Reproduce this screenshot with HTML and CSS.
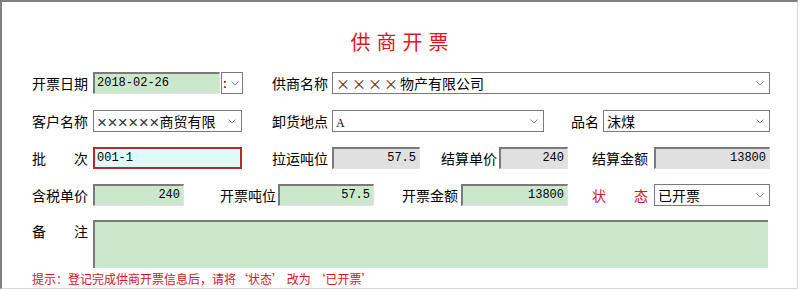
FILE: index.html
```html
<!DOCTYPE html>
<html>
  <head>
    <meta http-equiv="content-type" content="text/html; charset=UTF-8">
    <title>供商开票</title>
    <link rel="stylesheet" href="styles.css">
  </head>
<body>
  <div class="form">
    <h1 class="title">供商开票</h1>

    <div class="row r1">
      <div class="lbl">开票日期</div>
      <div class="field sunk green num" style="margin-left:5px;width:127px">2018-02-26</div>
      <div class="dropbtn"><span class="colon">:</span><svg class="chev" width="8" height="5" viewBox="0 0 8 5"><path d="M0.5 0.5 L4 4 L7.5 0.5" fill="none" stroke="#8a8a8a" stroke-width="1"/></svg></div>
      <div class="lbl" style="margin-left:29px">供商名称</div>
      <div class="field combo" style="margin-left:4px;width:438px"><span class="xx wide">××××</span>物产有限公司<svg class="chev" width="8" height="5" viewBox="0 0 8 5"><path d="M0.5 0.5 L4 4 L7.5 0.5" fill="none" stroke="#8a8a8a" stroke-width="1"/></svg></div>
    </div>

    <div class="row r2">
      <div class="lbl">客户名称</div>
      <div class="field combo" style="margin-left:5px;width:149px"><span class="xx narrow">××××××</span>商贸有限<svg class="chev" width="8" height="5" viewBox="0 0 8 5"><path d="M0.5 0.5 L4 4 L7.5 0.5" fill="none" stroke="#8a8a8a" stroke-width="1"/></svg></div>
      <div class="lbl" style="margin-left:30px">卸货地点</div>
      <div class="field combo" style="margin-left:4px;width:212px"><span class="serif">A</span><svg class="chev" width="8" height="5" viewBox="0 0 8 5"><path d="M0.5 0.5 L4 4 L7.5 0.5" fill="none" stroke="#8a8a8a" stroke-width="1"/></svg></div>
      <div class="lbl short" style="margin-left:27px">品名</div>
      <div class="field combo" style="margin-left:4px;width:167px">沫煤<svg class="chev" width="8" height="5" viewBox="0 0 8 5"><path d="M0.5 0.5 L4 4 L7.5 0.5" fill="none" stroke="#8a8a8a" stroke-width="1"/></svg></div>
    </div>

    <div class="row r3">
      <div class="lbl spread"><span>批</span><span>次</span></div>
      <div class="field batch num" style="margin-left:5px;width:149px">001-1</div>
      <div class="lbl" style="margin-left:30px">拉运吨位</div>
      <div class="field sunk grey num right" style="margin-left:4px;width:88px">57.5</div>
      <div class="lbl" style="margin-left:21px">结算单价</div>
      <div class="field sunk grey num right" style="margin-left:2px;width:69px">240</div>
      <div class="lbl" style="margin-left:24px">结算金额</div>
      <div class="field sunk grey num right" style="margin-left:6px;width:116px">13800</div>
    </div>

    <div class="row r4">
      <div class="lbl">含税单价</div>
      <div class="field sunk green num right" style="margin-left:5px;width:91px">240</div>
      <div class="lbl" style="margin-left:36px">开票吨位</div>
      <div class="field sunk green num right" style="margin-left:2px;width:96px">57.5</div>
      <div class="lbl" style="margin-left:28px">开票金额</div>
      <div class="field sunk green num right" style="margin-left:3px;width:107px">13800</div>
      <div class="lbl spread red" style="margin-left:24px"><span>状</span><span>态</span></div>
      <div class="field combo" style="margin-left:6px;width:116px">已开票<svg class="chev" width="8" height="5" viewBox="0 0 8 5"><path d="M0.5 0.5 L4 4 L7.5 0.5" fill="none" stroke="#8a8a8a" stroke-width="1"/></svg></div>
    </div>

    <div class="row r5">
      <div class="lbl spread top"><span>备</span><span>注</span></div>
      <div class="field sunk green memo" style="margin-left:5px;width:675px"></div>
    </div>

    <div class="hint">提示：登记完成供商开票信息后，请将‘状态’ 改为 ‘已开票’</div>
  </div>
</body>
</html>
```

FILE: styles.css
```css
html, body {
  margin: 0;
  background: #fff;
}

body {
  font-family: "Noto Sans CJK SC", sans-serif;
  font-size: 14px;
  color: #000;
}

.form {
  box-sizing: border-box;
  width: 798px;
  height: 289px;
  border-top: 2px solid #808080;
  border-left: 2px solid #808080;
  border-right: 1px solid #d9d9d9;
  border-bottom: 1px solid #d9d9d9;
  padding-top: 26px;
}

.title {
  margin: 0;
  height: 28px;
  line-height: 28px;
  text-align: center;
  font-size: 20px;
  font-weight: normal;
  letter-spacing: 6px;
  padding-left: 6px;
  color: #e8141c;
}

.row {
  display: flex;
  align-items: center;
  height: 22px;
}
.r1 { margin-top: 16px; }
.r2 { margin-top: 16px; }
.r3 { margin-top: 15px; }
.r4 { margin-top: 15px; }
.r5 {
  margin-top: 14px;
  height: 48px;
  align-items: flex-start;
}

.lbl {
  width: 56px;
  margin-left: 30px;
  line-height: 20px;
  white-space: nowrap;
  flex: none;
}
.lbl.short { width: 28px; }
.lbl.spread {
  display: flex;
  justify-content: space-between;
}
.lbl.top { padding-top: 1px; }
.red { color: #d4141e; }

.field {
  box-sizing: border-box;
  height: 22px;
  line-height: 19px;
  flex: none;
  white-space: nowrap;
  overflow: hidden;
}

.sunk {
  border-top: 2px solid #7a7a7a;
  border-left: 2px solid #7a7a7a;
  border-right: 1px solid #e4e4e4;
  border-bottom: 1px solid #e4e4e4;
  padding: 0 3px 0 2px;
}
.green { background: #cbe8cc; }
.grey { background: #e0e0e0; }
.right { text-align: right; }

.num {
  font-family: "Liberation Mono", monospace;
  font-size: 12px;
}

.batch {
  border: 2px solid #b8292d;
  background: #dcfcfc;
  padding: 0 2px;
}

.combo {
  position: relative;
  border: 1px solid #7a7a7a;
  background: #fff;
  padding: 0 16px 0 3px;
  line-height: 20px;
}
.combo .chev {
  position: absolute;
  right: 5px;
  top: 8px;
}

.xx { color: #333; }
.xx.wide { letter-spacing: 2px; }
.xx.narrow {
  font-family: "Liberation Sans", sans-serif;
  font-size: 17px;
  letter-spacing: 0.5px;
  vertical-align: -1px;
}
.serif {
  font-family: "Liberation Serif", serif;
  font-size: 12px;
}

.dropbtn {
  box-sizing: border-box;
  width: 22px;
  height: 22px;
  margin-left: 1px;
  border: 1px solid #7a7a7a;
  background: #fff;
  display: flex;
  align-items: center;
  flex: none;
}
.dropbtn .colon {
  font-size: 13px;
  line-height: 18px;
  margin-left: 1px;
  width: 5px;
}
.dropbtn .chev { margin-left: 3px; }

.memo {
  height: 48px;
  border-right: none;
  border-bottom: none;
}

.hint {
  margin-top: 4px;
  margin-left: 30px;
  font-size: 12px;
  line-height: 14px;
  color: #d4141e;
}
```
